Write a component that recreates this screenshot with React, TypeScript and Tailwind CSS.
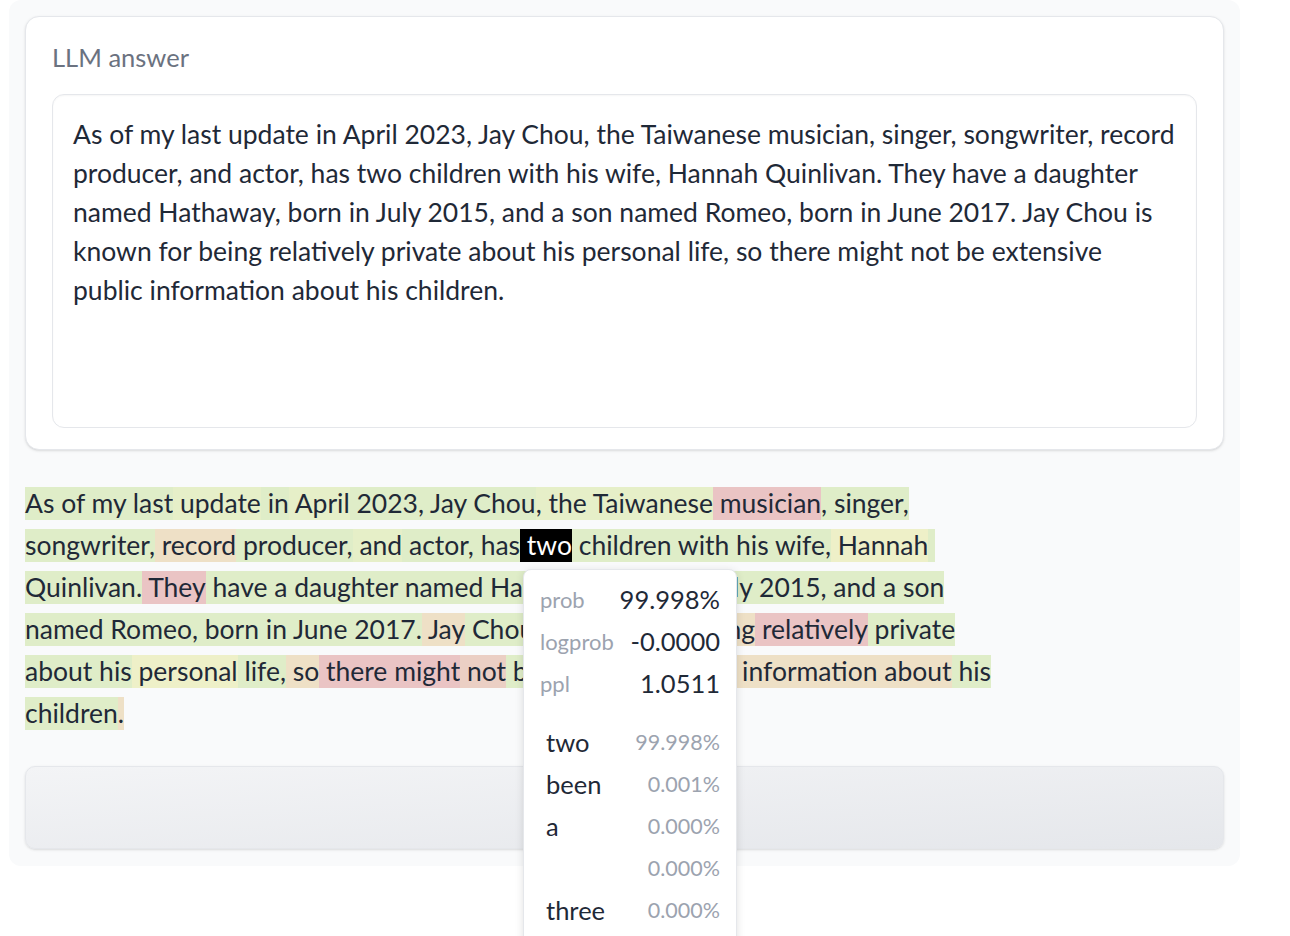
import React from 'react';

type Tok = { t: string; c: string };

// token colours, roughly by probability
const G = 'bg-[#dfedc8]';
const Y = 'bg-[#e6efc8]';
const P = 'bg-[#eef0c8]';
const T = 'bg-[#eee0c6]';
const R = 'bg-[#eac4c4]';
const R2 = 'bg-[#ebcfc4]';
const K = 'bg-black text-white';

const lines: Tok[][] = [
  [
    { t: 'As', c: G },
    { t: ' of my last', c: G },
    { t: ' update', c: Y },
    { t: ' in', c: G },
    { t: ' April', c: Y },
    { t: ' 2023, Jay Chou', c: G },
    { t: ', the Taiwanese', c: Y },
    { t: ' musician', c: R },
    { t: ', singer,', c: G },
  ],
  [
    { t: 'songwriter,', c: G },
    { t: ' record', c: T },
    { t: ' producer,', c: G },
    { t: ' and', c: Y },
    { t: ' actor, has', c: G },
    { t: ' two', c: K },
    { t: ' children with his wife,', c: G },
    { t: ' Hannah', c: P },
    { t: '\u00a0', c: G },
  ],
  [
    { t: 'Quinlivan.', c: G },
    { t: ' They', c: R },
    { t: ' have a daughter named Hathaway, born in July 2015, and a son', c: G },
  ],
  [
    { t: 'named Romeo, born in June 2017.', c: G },
    { t: ' Jay', c: T },
    { t: ' Chou is known for', c: G },
    { t: ' being', c: T },
    { t: ' relatively', c: R },
    { t: ' private', c: G },
  ],
  [
    { t: 'about his', c: G },
    { t: ' personal', c: P },
    { t: ' life,', c: G },
    { t: ' so', c: T },
    { t: ' there might', c: R },
    { t: ' not', c: R2 },
    { t: ' be extensive', c: G },
    { t: ' public information about', c: T },
    { t: ' his', c: G },
  ],
  [
    { t: 'children', c: G },
    { t: '.', c: T },
  ],
];

const answer = [
  'As of my last update in April 2023, Jay Chou, the Taiwanese musician, singer, songwriter, record',
  'producer, and actor, has two children with his wife, Hannah Quinlivan. They have a daughter',
  'named Hathaway, born in July 2015, and a son named Romeo, born in June 2017. Jay Chou is',
  'known for being relatively private about his personal life, so there might not be extensive',
  'public information about his children.',
];

const stats = [
  ['prob', '99.998%'],
  ['logprob', '-0.0000'],
  ['ppl', '1.0511'],
];

const top = [
  ['two', '99.998%'],
  ['been', '0.001%'],
  ['a', '0.000%'],
  ['', '0.000%'],
  ['three', '0.000%'],
];

export default function App() {
  return (
    <div className="h-screen w-full overflow-hidden bg-white text-[#1f2937] font-['Lato','Noto_Sans',sans-serif]">
      <div className="ml-[9px] w-[1231px] rounded-xl bg-[#f9fafb] px-4 pt-4 pb-[17px]">
        {/* answer card */}
        <div className="rounded-[14px] border border-[#e5e7eb] bg-white px-[26px] pt-[25px] pb-[21px] shadow-sm">
          <div className="mb-[22px] text-[25.5px] leading-[30px] text-[#6b7280]">LLM answer</div>
          <div className="h-[334px] rounded-xl border border-[#e5e7eb] px-5 pt-[20px] text-[26.5px] leading-[39px] shadow-[inset_0_1px_2px_rgba(0,0,0,0.04)]">
            {answer.map((l, i) => (
              <div key={i}>{l}</div>
            ))}
          </div>
        </div>

        {/* highlighted tokens */}
        <div className="relative mt-[37px] text-[26.5px]">
          {lines.map((line, i) => (
            <div key={i} className="mb-[9px] flex h-[33px] items-center whitespace-pre leading-[33px]">
              {line.map((tok, j) => (
                <span key={j} className={tok.c}>
                  {tok.t}
                </span>
              ))}
            </div>
          ))}

          {/* tooltip */}
          <div className="absolute left-[498px] top-[82px] z-10 w-[214px] rounded-lg border border-[#e5e7eb] bg-white px-[16px] pt-2 pb-4 shadow-[0_2px_8px_rgba(0,0,0,0.12)]">
            {stats.map(([k, v]) => (
              <div key={k} className="flex h-[42px] items-center justify-between">
                <span className="text-[22px] text-[#9ca3af]">{k}</span>
                <span className="text-[25.5px]">{v}</span>
              </div>
            ))}
            <div className="mt-[17px] pl-[6px]">
              {top.map(([k, v], i) => (
                <div key={i} className="flex h-[42px] items-center justify-between">
                  <span className="text-[25.5px]">{k}</span>
                  <span className="text-[21.5px] text-[#9ca3af]">{v}</span>
                </div>
              ))}
            </div>
          </div>
        </div>

        {/* button bar */}
        <div className="mt-[36px] h-[83px] rounded-[10px] border border-[#e5e7eb] bg-gradient-to-br from-[#f3f4f6] to-[#e5e7eb] shadow-sm"></div>
      </div>
    </div>
  );
}
